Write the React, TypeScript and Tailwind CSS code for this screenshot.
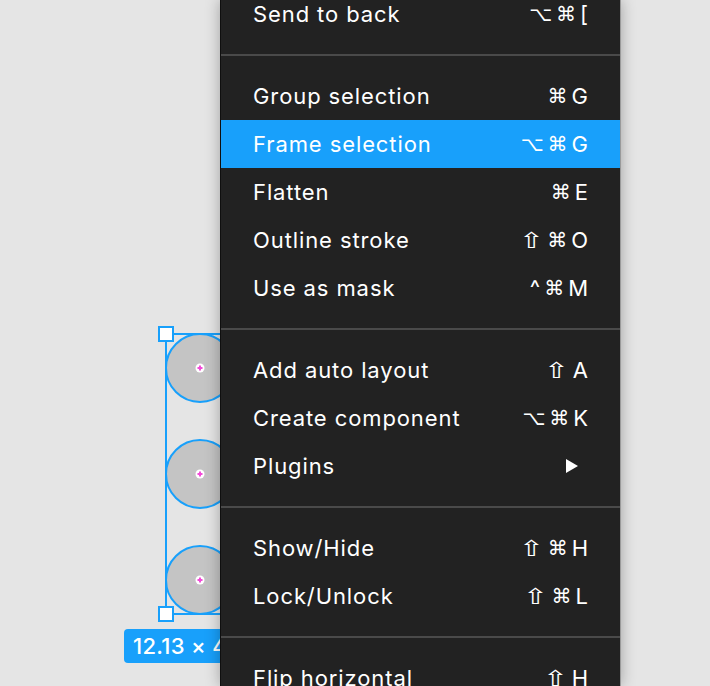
import React from "react";

type Item = { label: string; keys: string[]; active?: boolean; arrow?: boolean };

const groups: Item[][] = [
  [{ label: "Send to back", keys: ["⌥", "⌘", "["] }],
  [
    { label: "Group selection", keys: ["⌘", "G"] },
    { label: "Frame selection", keys: ["⌥", "⌘", "G"], active: true },
    { label: "Flatten", keys: ["⌘", "E"] },
    { label: "Outline stroke", keys: ["⇧", "⌘", "O"] },
    { label: "Use as mask", keys: ["^", "⌘", "M"] },
  ],
  [
    { label: "Add auto layout", keys: ["⇧", "A"] },
    { label: "Create component", keys: ["⌥", "⌘", "K"] },
    { label: "Plugins", keys: [], arrow: true },
  ],
  [
    { label: "Show/Hide", keys: ["⇧", "⌘", "H"] },
    { label: "Lock/Unlock", keys: ["⇧", "⌘", "L"] },
  ],
  [{ label: "Flip horizontal", keys: ["⇧", "H"] }],
];

function Row({ item }: { item: Item }) {
  return (
    <div
      className={`flex h-[48px] items-center justify-between pl-[32px] pr-[32px] ${
        item.active ? "bg-[#18a0fb]" : ""
      }`}
    >
      <span className="text-[22px] tracking-[0.9px] text-white">{item.label}</span>
      {item.arrow ? (
        <svg width="12" height="14" viewBox="0 0 12 14" className="mr-[10px]">
          <path d="M0 0 L12 7 L0 14 Z" fill="#fff" />
        </svg>
      ) : (
        <span className="flex items-center gap-[4px] text-[22px] text-white">
          {item.keys.map((k, i) => (
            <span
              key={i}
              className={
                k === "⌘" || k === "⌥"
                  ? "font-['DejaVu_Sans',sans-serif] text-[20px]"
                  : k === "⇧"
                  ? "inline-block scale-x-[1.35] px-[3px] font-['DejaVu_Sans',sans-serif] text-[22px]"
                  : ""
              }
            >
              {k}
            </span>
          ))}
        </span>
      )}
    </div>
  );
}

function Dot() {
  return (
    <svg width="10" height="10" viewBox="0 0 10 10" className="absolute left-1/2 top-1/2 -translate-x-1/2 -translate-y-1/2">
      <circle cx="5" cy="5" r="4.5" fill="#fff" />
      <path d="M5 2.5 V7.5 M2.5 5 H7.5" stroke="#f24bd8" strokeWidth="2" />
    </svg>
  );
}

function Circle() {
  return (
    <div className="relative h-[70px] w-[70px] shrink-0 rounded-full border-2 border-[#18a0fb] bg-[#c4c4c4]">
      <Dot />
    </div>
  );
}

export default function App() {
  return (
    <div className="relative h-[686px] w-[710px] overflow-hidden bg-[#e5e5e5] font-['Inter',sans-serif]">
      {/* canvas selection */}
      <div className="absolute left-[165px] top-[333px] flex h-[282px] w-[100px] flex-col gap-[36px] border-2 border-[#18a0fb]">
        <div className="-ml-[2px] -mt-[2px] flex flex-col gap-[36px]">
          <Circle />
          <Circle />
          <Circle />
        </div>
      </div>
      <div className="absolute left-[158px] top-[326px] h-[16px] w-[16px] border-2 border-[#18a0fb] bg-white" />
      <div className="absolute left-[158px] top-[606px] h-[16px] w-[16px] border-2 border-[#18a0fb] bg-white" />
      <div className="absolute left-[124px] top-[629px] flex h-[34px] items-center rounded-[4px] bg-[#18a0fb] pl-[9px] pr-[12px] text-[22px] font-medium tracking-[0.3px] text-white">
        12.13 × 480
      </div>

      {/* menu */}
      <div className="absolute left-[220px] top-0 h-[686px] w-[401px] overflow-hidden border-l border-r border-l-[#0f0f0f] border-r-[#9a9a9a] bg-[#222222] shadow-[0_0_14px_rgba(0,0,0,0.3)]">
        <div className="-mt-[10px] flex flex-col">
          {groups.map((g, gi) => (
            <div key={gi} className="flex flex-col">
              {gi > 0 && (
                <div className="flex h-[34px] items-center">
                  <div className="h-[2px] w-full bg-[#4a4a4a]" />
                </div>
              )}
              {g.map((it) => (
                <Row key={it.label} item={it} />
              ))}
            </div>
          ))}
        </div>
      </div>
    </div>
  );
}
